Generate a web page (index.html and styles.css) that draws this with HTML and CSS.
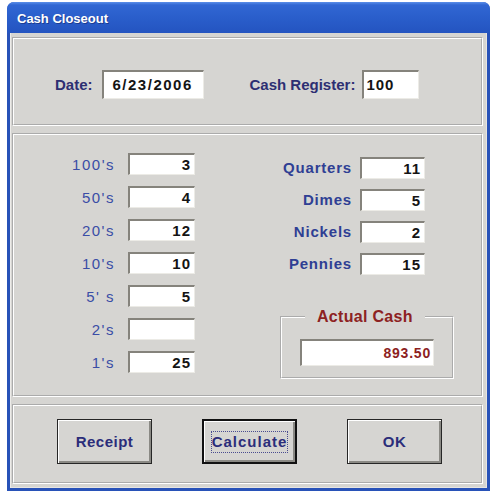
FILE: index.html
```html
<!DOCTYPE html>
<html>
<head>
<meta charset="utf-8">
<title>Cash Closeout</title>
<link rel="stylesheet" href="styles.css">
</head>
<body>
<div class="window">
  <div class="titlebar">Cash Closeout</div>
  <div class="client">
    <div class="panel panel-top">
      <span class="lbl-head lbl-date">Date:</span>
      <div class="field field-date">6/23/2006</div>
      <span class="lbl-head lbl-reg">Cash Register:</span>
      <div class="field field-reg">100</div>
    </div>
    <div class="panel panel-mid">
      <div class="col-bills">
        <span class="lbl-bill">100's</span><div class="field num">3</div>
        <span class="lbl-bill">50's</span><div class="field num">4</div>
        <span class="lbl-bill">20's</span><div class="field num">12</div>
        <span class="lbl-bill">10's</span><div class="field num">10</div>
        <span class="lbl-bill">5' s</span><div class="field num">5</div>
        <span class="lbl-bill">2's</span><div class="field num"></div>
        <span class="lbl-bill">1's</span><div class="field num">25</div>
      </div>
      <div class="col-coins">
        <div class="coin-grid">
          <span class="lbl-coin">Quarters</span><div class="field num">11</div>
          <span class="lbl-coin">Dimes</span><div class="field num">5</div>
          <span class="lbl-coin">Nickels</span><div class="field num">2</div>
          <span class="lbl-coin">Pennies</span><div class="field num">15</div>
        </div>
        <fieldset class="actual">
          <legend>Actual Cash</legend>
          <div class="field total">893.50</div>
        </fieldset>
      </div>
    </div>
    <div class="panel panel-bottom">
      <button class="btn">Receipt</button>
      <button class="btn btn-default"><span class="focus">Calculate</span></button>
      <button class="btn">OK</button>
    </div>
  </div>
</div>
</body>
</html>
```
FILE: styles.css
```css
body {
  margin: 0;
  background: #ffffff;
  font-family: "Liberation Sans", Arial, sans-serif;
}

.window {
  margin: 2px 0 0 7px;
  width: 483px;
  height: 489px;
  box-sizing: border-box;
  background: #2852b8;
  border-radius: 7px 7px 0 0;
  padding: 0 3px 3px;
  display: flex;
  flex-direction: column;
}

.titlebar {
  flex: none;
  height: 31px;
  margin: 0 -3px;
  padding-left: 10px;
  border-radius: 7px 7px 0 0;
  background: linear-gradient(#5b8fe9 0, #3167d3 3px, #2a5ecb 50%, #2454c0 100%);
  color: #ffffff;
  font-weight: bold;
  font-size: 13px;
  line-height: 33px;
  text-shadow: 1px 1px 0 #1b3c92;
}

.client {
  flex: 1;
  background: #d6d5d2;
  padding: 4px 4px 4px 2px;
  display: flex;
  flex-direction: column;
  gap: 7px;
  box-shadow: inset 1px 0 0 #ecebe8, inset -1px -1px 0 #e6e5e2;
}

.panel {
  box-sizing: border-box;
  border: 2px groove #ffffff;
}

/* top panel */
.panel-top {
  height: 89px;
  display: flex;
  align-items: center;
  padding: 6px 0 0 41px;
}

.lbl-head {
  color: #2d2f72;
  font-weight: bold;
  font-size: 15px;
}

.lbl-date {
  margin-right: 9px;
}

.lbl-reg {
  margin-left: 46px;
  margin-right: 7px;
}

.field {
  box-sizing: border-box;
  background: #ffffff;
  border-top: 2px solid #85837c;
  border-left: 2px solid #85837c;
  border-right: 1px solid #ecebe6;
  border-bottom: 1px solid #ecebe6;
  color: #141414;
  font-weight: bold;
  font-size: 15px;
}

.field-date {
  width: 102px;
  height: 29px;
  line-height: 26px;
  padding-left: 9px;
  letter-spacing: 1.5px;
}

.field-reg {
  width: 57px;
  height: 29px;
  line-height: 26px;
  padding-left: 2px;
  letter-spacing: 1px;
}

/* middle panel */
.panel-mid {
  height: 264px;
  display: flex;
  align-items: flex-start;
}

.col-bills {
  display: grid;
  grid-template-columns: 75px 67px;
  grid-auto-rows: 22px;
  column-gap: 13px;
  row-gap: 11px;
  padding: 18px 0 0 26px;
}

.lbl-bill {
  color: #3a4da6;
  font-size: 15px;
  letter-spacing: 1.5px;
  text-align: right;
  line-height: 24px;
}

.num {
  text-align: right;
  padding-right: 3px;
  line-height: 20px;
  letter-spacing: 1px;
}

.col-coins {
  margin-left: 77px;
  padding-top: 22px;
  display: flex;
  flex-direction: column;
}

.coin-grid {
  display: grid;
  grid-template-columns: 80px 65px;
  grid-auto-rows: 22px;
  column-gap: 8px;
  row-gap: 10px;
}

.lbl-coin {
  color: #2f3f94;
  font-weight: bold;
  font-size: 15px;
  letter-spacing: 0.8px;
  text-align: right;
  line-height: 22px;
}

.actual {
  box-sizing: border-box;
  width: 174px;
  margin: 33px 0 0 8px;
  padding: 0 0 11px 18px;
  border: 2px groove #ffffff;
}

.actual legend {
  margin-left: 5px;
  padding: 0 12px;
  color: #8d2222;
  font-weight: bold;
  font-size: 16px;
  line-height: 18px;
  letter-spacing: 0.3px;
}

.total {
  width: 134px;
  height: 27px;
  margin-top: 13px;
  text-align: right;
  padding-right: 2px;
  color: #8d1f1f;
  font-size: 14px;
  line-height: 24px;
  letter-spacing: 0.8px;
}

/* bottom panel */
.panel-bottom {
  height: 80px;
  display: flex;
  align-items: flex-start;
  gap: 50px;
  padding: 13px 0 0 43px;
}

.btn {
  box-sizing: border-box;
  width: 95px;
  height: 45px;
  background: #d6d5d2;
  border: 1px solid #262626;
  box-shadow: inset 1px 1px 0 #ffffff, inset -2px -2px 0 #8a8984;
  color: #2b2d7a;
  font-family: "Liberation Sans", Arial, sans-serif;
  font-weight: bold;
  font-size: 15px;
  letter-spacing: 0.5px;
  padding: 0;
}

.btn-default {
  border: 2px solid #111111;
}

.focus {
  display: inline-block;
  border: 1px dotted #4a4c90;
  padding: 2px 0;
  line-height: 16px;
  letter-spacing: 1px;
}
```
